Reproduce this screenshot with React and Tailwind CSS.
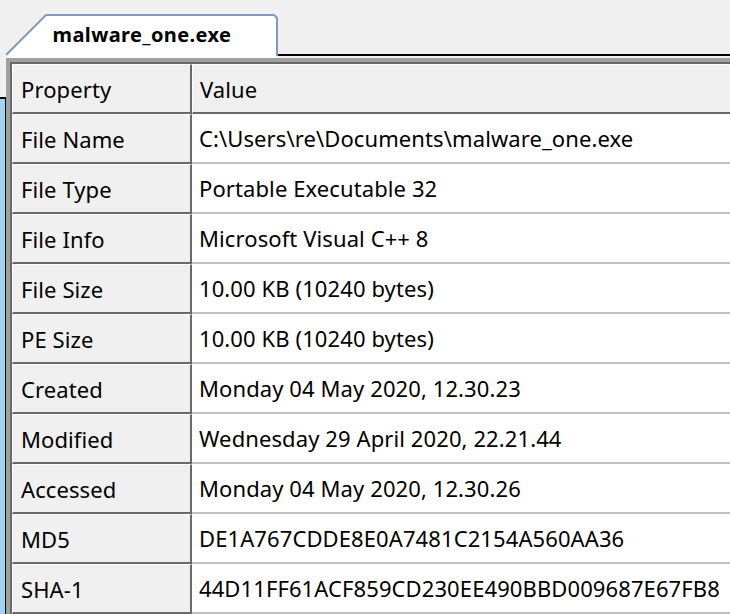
import React from 'react';

const rows = [
  ['File Name', 'C:\\Users\\re\\Documents\\malware_one.exe'],
  ['File Type', 'Portable Executable 32'],
  ['File Info', 'Microsoft Visual C++ 8'],
  ['File Size', '10.00 KB (10240 bytes)'],
  ['PE Size', '10.00 KB (10240 bytes)'],
  ['Created', 'Monday 04 May 2020, 12.30.23'],
  ['Modified', 'Wednesday 29 April 2020, 22.21.44'],
  ['Accessed', 'Monday 04 May 2020, 12.30.26'],
  ['MD5', 'DE1A767CDDE8E0A7481C2154A560AA36'],
  ['SHA-1', '44D11FF61ACF859CD230EE490BBD009687E67FB8'],
];

function Tab({ label }) {
  return (
    <div className="relative ml-[6px] h-[44px] w-[272px] shrink-0">
      <svg className="absolute inset-0" width="272" height="44" viewBox="0 0 272 44">
        <path d="M0 44 L0 41 L40 1 H268 L271 4 V44 Z" fill="#ffffff" />
        <path d="M0 41 L40 1 H268 L271 4 V42" fill="none" stroke="#7f9cbd" strokeWidth="2" />
      </svg>
      <div className="relative flex h-[40px] items-center justify-center pt-[2px] text-[20px] font-bold tracking-[0.4px] text-black">
        {label}
      </div>
    </div>
  );
}

export default function App() {
  return (
    <div
      className="relative h-[614px] w-[730px] overflow-hidden bg-[#f0f0f0] text-black"
      style={{ fontFamily: '"Noto Sans", "Open Sans", sans-serif' }}
    >
      {/* window peeking out on the left */}
      <div className="absolute left-0 top-[97px] bottom-0 w-[6px] border-t-2 border-r border-black bg-[#a6d2f2]" />

      <div className="flex h-[58px] items-end">
        <Tab label="malware_one.exe" />
        <div className="flex h-[44px] flex-1 flex-col justify-end pb-[2px]">
          <div className="-ml-[2px] h-[2px] bg-black" />
        </div>
      </div>

      <div className="ml-[6px] border-l-4 border-t-4 border-[#a0a0a0]">
        <div className="border-l-2 border-t-2 border-[#696969] text-[22px] leading-none tracking-[0.1px]">
          <div className="flex h-[50px]">
            <div className="flex w-[180px] shrink-0 items-center border-t border-l border-white border-b-2 border-r-2 border-b-[#696969] border-r-[#696969] pl-[8px]">
              Property
            </div>
            <div className="flex flex-1 items-center border-t border-l border-white border-b-2 border-b-[#696969] pl-[7px]">
              Value
            </div>
          </div>
          {rows.map(([k, v]) => (
            <div key={k} className="flex h-[50px]">
              <div className="flex w-[180px] shrink-0 items-center border-t border-l border-white border-b-2 border-r-2 border-b-[#696969] border-r-[#696969] pl-[8px]">
                {k}
              </div>
              <div className="flex flex-1 items-center whitespace-nowrap border-b-2 border-[#c0c0c0] bg-white pl-[7px]">
                {v}
              </div>
            </div>
          ))}
        </div>
      </div>
    </div>
  );
}
